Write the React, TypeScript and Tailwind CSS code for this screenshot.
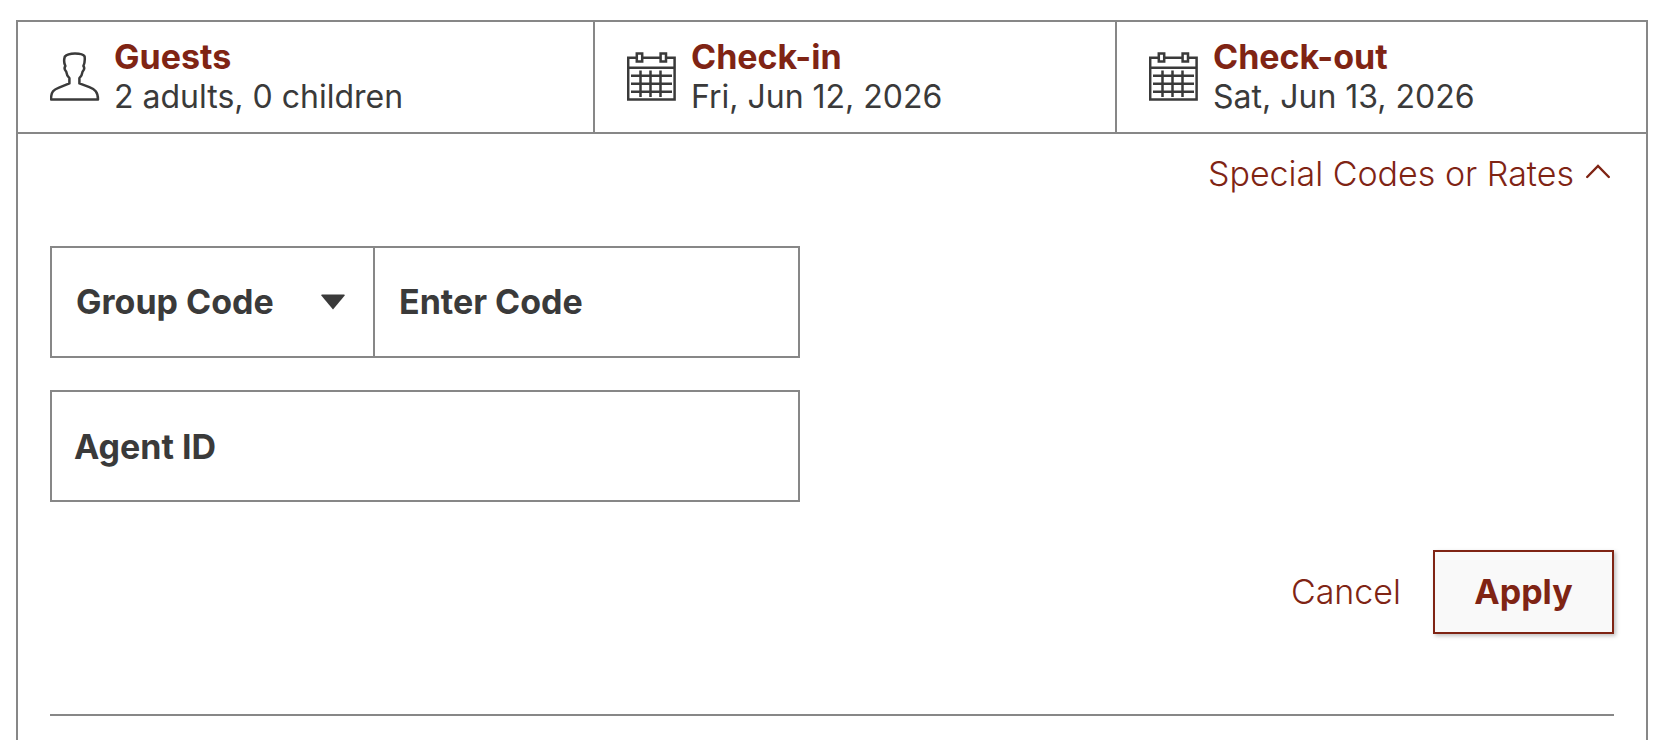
import { useState } from "react";
import type { ReactNode } from "react";

function GuestIcon() {
  return (
    <svg className="h-[50px] w-[50px] shrink-0" viewBox="0 0 50 50" fill="none" stroke="currentColor" strokeWidth="2.5" aria-hidden="true">
      <path
        d="M1 47.5C1 39.5 3.8 37.6 9 35.6L19.4 31.4V26.2C17.6 24.4 16.6 22.4 16.2 19.6C14.6 18 14 16 15.4 14C14 11.4 13.8 8 14.8 4.6C16.6 2.4 20.6 1.4 25 1.4C30 1.4 33.4 2.2 34.6 4.4C35 7.6 34.8 11 33.4 14C34.8 16 34.2 18 32.6 19.6C32.2 22.4 31.2 24.4 29.4 26.2V31.4L39.4 35.2C44.8 37.4 48 39.5 48 47.5Z"
        strokeLinejoin="round"
      />
    </svg>
  );
}

function CalendarIcon() {
  return (
    <svg className="h-[50px] w-[50px] shrink-0" viewBox="0 0 50 50" fill="none" stroke="currentColor" strokeWidth="2.5" aria-hidden="true">
      <path d="M10 5.8H1.2V47.6H47.6V5.8H39M15.5 5.8H34M1 15.8H48" />
      <path d="M9.8 1.4H15.2V9.6H9.8ZM33.6 1.4H39V9.6H33.6Z" />
      <path d="M4 23.8H45M4 31.8H45M4 39.8H45" />
      <path d="M13.5 18.6V45M23.5 18.6V45M33.5 18.6V45" />
    </svg>
  );
}

interface StayFieldProps {
  icon: ReactNode;
  title: string;
  value: string;
}

function StayField({ icon, title, value }: StayFieldProps) {
  return (
    <button type="button" className="flex items-center gap-3.5 border-r-2 border-[#878787] py-[15px] pl-8 text-left last:border-r-0">
      {icon}
      <span className="block">
        <span className="block text-[34px] leading-10 font-bold text-[#7f2414]">{title}</span>
        <span className="block">{value}</span>
      </span>
    </button>
  );
}

export default function App() {
  const [open, setOpen] = useState(true);
  const [codeType, setCodeType] = useState("group");
  const [code, setCode] = useState("");
  const [agentId, setAgentId] = useState("");

  return (
    <div className="bg-white pt-5 pr-[26px] pl-4 font-['Inter',sans-serif] text-[32px] leading-10 text-[#3a3a3a]">
      <div className="border-2 border-b-0 border-[#878787]">
        <div className="grid grid-cols-[577fr_522fr_529fr] border-b-2 border-[#878787]">
          <StayField icon={<GuestIcon />} title="Guests" value="2 adults, 0 children" />
          <StayField icon={<CalendarIcon />} title="Check-in" value="Fri, Jun 12, 2026" />
          <StayField icon={<CalendarIcon />} title="Check-out" value="Sat, Jun 13, 2026" />
        </div>

        <div className="px-8 pt-5 pb-6 text-[34px] leading-10">
          <div className="flex justify-end">
            <button
              type="button"
              aria-expanded={open}
              onClick={() => setOpen(!open)}
              className="flex items-center gap-3 pr-1 font-light text-[#7f2414]"
            >
              Special Codes or Rates
              <svg className="mb-1.5 h-4 w-6" viewBox="0 0 24 16" fill="none" stroke="currentColor" strokeWidth="2.4" aria-hidden="true">
                <path d="M1.2 14L12 3L22.8 14" strokeLinecap="round" />
              </svg>
            </button>
          </div>

          {open ? (
            <form className="mt-[52px]" onSubmit={(e) => e.preventDefault()}>
              <div className="max-w-[750px] space-y-8 font-bold">
                <div className="grid h-28 grid-cols-[323px_1fr] border-2 border-[#878787]">
                  <div className="relative border-r-2 border-[#878787]">
                    <select
                      aria-label="Code type"
                      value={codeType}
                      onChange={(e) => setCodeType(e.target.value)}
                      className="h-full w-full appearance-none bg-transparent pl-6 outline-none"
                    >
                      <option value="group">Group Code</option>
                      <option value="promo">Promo Code</option>
                      <option value="corporate">Corporate Code</option>
                    </select>
                    <svg className="pointer-events-none absolute inset-y-0 right-7 my-auto h-4 w-6" viewBox="0 0 24 16" fill="currentColor" aria-hidden="true">
                      <path d="M1 0.5H23Q24.5 0.5 23.5 1.8L12 15.5L0.5 1.8Q-0.5 0.5 1 0.5Z" />
                    </svg>
                  </div>
                  <input
                    aria-label="Enter Code"
                    value={code}
                    onChange={(e) => setCode(e.target.value)}
                    placeholder="Enter Code"
                    className="min-w-0 px-6 outline-none placeholder:text-[#3a3a3a]"
                  />
                </div>
                <div className="h-28 border-2 border-[#878787]">
                  <input
                    aria-label="Agent ID"
                    value={agentId}
                    onChange={(e) => setAgentId(e.target.value)}
                    placeholder="Agent ID"
                    className="h-full w-full px-[22px] outline-none placeholder:text-[#3a3a3a]"
                  />
                </div>
              </div>

              <div className="mt-12 flex items-center justify-end gap-8 text-[#7f2414]">
                <button type="button" onClick={() => setOpen(false)} className="font-light">
                  Cancel
                </button>
                <button
                  type="submit"
                  className="h-[84px] min-w-[181px] border-2 border-[#7f2414] bg-[#f9f9f9] px-8 font-bold shadow-[2px_2px_4px_rgba(0,0,0,0.25)]"
                >
                  Apply
                </button>
              </div>
            </form>
          ) : null}

          <hr className="mt-20 border-t-2 border-[#878787]" />
        </div>
      </div>
    </div>
  );
}
